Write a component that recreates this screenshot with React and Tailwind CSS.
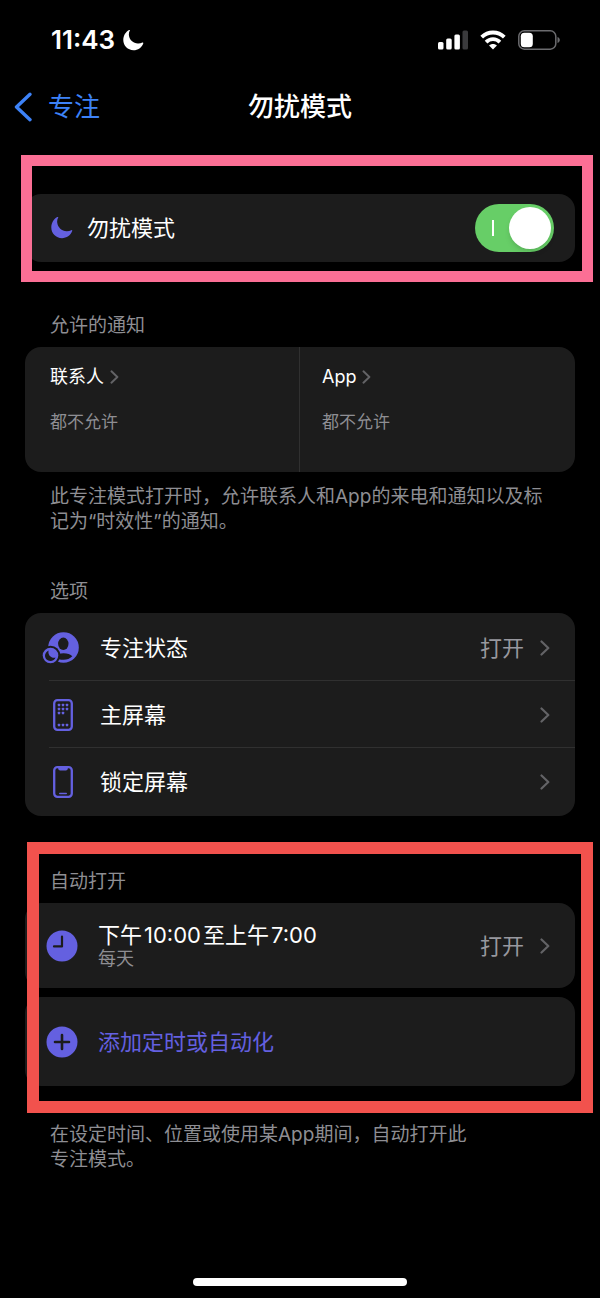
import React from "react";

const MOON = "M7.2 0.6C6.3 2.2 6 3.8 6.2 5.6C6.7 10.6 11 14.4 16 14.2C17.6 14.1 19 13.8 20.3 13.2C21 12.9 21.5 13.4 21.2 14.1C19.6 18.4 15.6 21.2 11 21.2C5 21.2 0.3 16.5 0.3 10.6C0.3 6.1 2.7 2.1 6.3 0.1C7 -0.2 7.5 0.1 7.2 0.6Z";

function Moon({ className }) {
  return (
    <svg viewBox="0 0 22 22" className={className} fill="currentColor" aria-hidden="true">
      <path d={MOON} />
    </svg>
  );
}

function Chevron({ className }) {
  return (
    <svg viewBox="0 0 10 16" className={className} fill="none" stroke="#636366" strokeWidth="2.2" strokeLinecap="round" strokeLinejoin="round" aria-hidden="true">
      <path d="M1.5 1.5L8.3 8L1.5 14.5" />
    </svg>
  );
}

function StatusBar() {
  return (
    <div className="flex h-20 items-center justify-between pr-10 pl-[51px]">
      <div className="flex items-center gap-2">
        <time className="text-[26px] leading-8 font-semibold">11:43</time>
        <Moon className="h-[21px] w-[21px]" />
      </div>
      <div className="flex items-center gap-3">
        <svg viewBox="0 0 30 20" className="h-5 w-[30px]" fill="#fff" aria-hidden="true">
          <rect x="0" y="12" width="5.5" height="7.5" rx="1.5" />
          <rect x="8.2" y="8.5" width="5.5" height="11" rx="1.5" />
          <rect x="16.4" y="4.5" width="5.5" height="15" rx="1.5" />
          <rect x="24.5" y="0.5" width="5.5" height="19" rx="1.5" fill="#3a3a3c" />
        </svg>
        <svg viewBox="0 0 26 20" className="h-5 w-[26px]" fill="none" stroke="#fff" strokeWidth="3.8" aria-hidden="true">
          <path d="M1.7 7.2C8 0.9 18 0.9 24.3 7.2" />
          <path d="M6.1 12.2C10 8.2 16 8.2 19.9 12.2" />
          <path d="M13 19.6L9.1 15.6C11.3 13.6 14.7 13.6 16.9 15.6Z" fill="#fff" stroke="none" />
        </svg>
        <svg viewBox="0 0 42 20" className="h-5 w-[42px]" aria-hidden="true">
          <rect x="0.8" y="0.8" width="37" height="18.4" rx="5.5" fill="none" stroke="#6b6b6e" strokeWidth="1.5" />
          <rect x="2.8" y="2.8" width="12" height="14.4" rx="3.5" fill="#fff" />
          <path d="M39.5 7V13C41 12.5 41.8 11.4 41.8 10S41 7.5 39.5 7Z" fill="#6b6b6e" />
        </svg>
      </div>
    </div>
  );
}

function FocusStatusIcon() {
  return (
    <svg viewBox="0 0 44 34" className="h-[34px] w-11" aria-hidden="true">
      <circle cx="22.5" cy="16.5" r="15.3" fill="#6460e0" />
      <ellipse cx="22.3" cy="12.8" rx="5.2" ry="6.2" fill="#1c1c1c" />
      <path d="M14 25C16 22.8 19 22.2 22.5 22.2C26.5 22.2 29.5 23.4 31.3 25.2C29 27.6 26 28.8 22.5 28.8C19 28.8 16 28 14 25Z" fill="#1c1c1c" />
      <circle cx="9.5" cy="24.5" r="9.8" fill="#1c1c1c" />
      <circle cx="9.5" cy="24.5" r="7.8" fill="#6460e0" />
      <path d="M7.6 19.4C5.4 20.4 4 22.4 4 24.8C4 27.9 6.5 30 9.4 30C11.8 30 13.8 28.7 14.6 26.6C10.4 27.6 6.4 24 7.6 19.4Z" fill="#1c1c1c" />
    </svg>
  );
}

function HomeScreenIcon() {
  const dots = [[6, 6], [10, 6], [14, 6], [6, 10], [10, 10], [14, 10], [6, 14], [10, 14], [6, 26], [10, 26], [14, 26]];
  return (
    <svg viewBox="0 0 20 32" className="h-8 w-5" fill="#6460e0" aria-hidden="true">
      <rect x="1.2" y="1.2" width="17.6" height="29.6" rx="3.2" fill="none" stroke="#6460e0" strokeWidth="2.3" />
      {dots.map(([x, y]) => (
        <rect key={`${x}-${y}`} x={x - 1.2} y={y - 1.2} width="2.4" height="2.4" rx="0.5" />
      ))}
    </svg>
  );
}

function LockScreenIcon() {
  return (
    <svg viewBox="0 0 20 32" className="h-8 w-5" fill="#6460e0" aria-hidden="true">
      <rect x="1.2" y="1.2" width="17.6" height="29.6" rx="3.2" fill="none" stroke="#6460e0" strokeWidth="2.3" />
      <path d="M5.2 1.5H14.8V2.6Q14.8 4.6 12.8 4.6H7.2Q5.2 4.6 5.2 2.6Z" />
      <rect x="6" y="26.8" width="8" height="1.5" rx="0.7" />
    </svg>
  );
}

function ClockIcon() {
  return (
    <svg viewBox="0 0 32 32" className="h-8 w-8 shrink-0" aria-hidden="true">
      <circle cx="16" cy="16" r="15.5" fill="#6460e0" />
      <path d="M16 6.5V16.4H8" fill="none" stroke="#1c1c1c" strokeWidth="2.2" strokeLinecap="round" strokeLinejoin="round" />
    </svg>
  );
}

function PlusIcon() {
  return (
    <svg viewBox="0 0 32 32" className="h-8 w-8 shrink-0" aria-hidden="true">
      <circle cx="16" cy="16" r="15.5" fill="#6460e0" />
      <path d="M16 9V23M9 16H23" fill="none" stroke="#1c1c1c" strokeWidth="2.6" strokeLinecap="round" />
    </svg>
  );
}

function OptionRow({ icon, label, value, divided }) {
  return (
    <li className="relative">
      <a href="#" className="flex h-[67px] items-center pr-[25px] pl-4">
        <span className="mr-[15px] flex w-11 justify-center">{icon}</span>
        <span className="flex-1 text-[22px] leading-8">{label}</span>
        {value && <span className="mr-4 text-[22px] leading-8 text-[#98989f]">{value}</span>}
        <Chevron className="h-4 w-[10px]" />
      </a>
      {divided && <div className="absolute right-0 bottom-0 left-6 h-px bg-[#303030]" />}
    </li>
  );
}

function AllowedColumn({ title, className }) {
  return (
    <a href="#" className={className}>
      <span className="flex items-center gap-[6px]">
        <span className="text-[18px] leading-7">{title}</span>
        <Chevron className="h-[14px] w-[9px]" />
      </span>
      <span className="mt-[17px] block text-[17px] leading-7 text-[#8e8e93]">都不允许</span>
    </a>
  );
}

export default function App() {
  return (
    <div lang="zh-CN" className="flex min-h-screen flex-col bg-black font-['Inter','Noto_Sans_CJK_SC',sans-serif] text-white">
      <StatusBar />

      <header className="grid h-[54px] grid-cols-[1fr_auto_1fr] items-center px-[14px]">
        <a href="#" className="flex items-center gap-4 text-[26px] leading-9 text-[#3d82f7]">
          <svg viewBox="0 0 18 30" className="h-[30px] w-[18px]" fill="none" stroke="currentColor" strokeWidth="3.4" strokeLinecap="round" strokeLinejoin="round" aria-hidden="true">
            <path d="M16 2.3L2.5 15L16 27.7" />
          </svg>
          专注
        </a>
        <h1 className="text-[26px] leading-9 font-medium">勿扰模式</h1>
      </header>

      <main className="flex-1">
        <section className="relative mt-[21px] px-[25px] pt-[39px] pb-5">
          <label className="flex h-[68px] items-center rounded-2xl bg-[#1c1c1c] pr-[21px] pl-[26px]">
            <Moon className="h-[22px] w-[22px] text-[#6460e0]" />
            <span className="ml-[14px] flex-1 text-[22px] leading-8">勿扰模式</span>
            <span className="relative flex">
              <input type="checkbox" role="switch" defaultChecked className="peer h-12 w-[79px] appearance-none rounded-full bg-[#3a3a3c] checked:bg-[#67ce67]" />
              <span className="pointer-events-none absolute top-4 left-[17px] h-4 w-[2px] bg-white" />
              <span className="pointer-events-none absolute top-[3px] left-[3px] h-[42px] w-[42px] rounded-full bg-white shadow-md peer-checked:left-[34px]" />
            </span>
          </label>
          <div className="pointer-events-none absolute inset-y-0 right-[7px] left-[21px] border-[11px] border-[#fb6f95]" />
        </section>

        <section className="mt-[30px] px-[25px]">
          <h2 className="px-[25px] text-[19px] leading-7 text-[#8e8e93]">允许的通知</h2>
          <div className="mt-[7px] grid h-[125px] grid-cols-2 rounded-2xl bg-[#1c1c1c]">
            <AllowedColumn title="联系人" className="border-r border-[#303030] pt-4 pl-[25px]" />
            <AllowedColumn title="App" className="pt-4 pl-[22px]" />
          </div>
          <p className="mt-3 pl-[25px] text-[19px] leading-[25px] whitespace-nowrap text-[#8e8e93]">
            此专注模式打开时，允许联系人和App的来电和通知以及标
            <br />
            记为“时效性”的通知。
          </p>
        </section>

        <section className="mt-11 px-[25px]">
          <h2 className="px-[25px] text-[19px] leading-7 text-[#8e8e93]">选项</h2>
          <ul className="mt-[7px] rounded-2xl bg-[#1c1c1c] py-px">
            <OptionRow icon={<FocusStatusIcon />} label="专注状态" value="打开" divided />
            <OptionRow icon={<HomeScreenIcon />} label="主屏幕" divided />
            <OptionRow icon={<LockScreenIcon />} label="锁定屏幕" />
          </ul>
        </section>

        <section className="relative mt-[26px] px-[25px] pt-[26px] pb-[27px]">
          <h2 className="px-[25px] text-[19px] leading-7 text-[#8e8e93]">自动打开</h2>
          <a href="#" className="mt-[7px] flex h-[85px] items-center rounded-2xl bg-[#1c1c1c] pr-[25px] pl-[21px]">
            <ClockIcon />
            <span className="ml-[20px] flex-1">
              <span className="block text-[22px] leading-[26px]">
                下午<span className="mx-[2px]">10:00</span>至上午<span className="mx-[2px]">7:00</span>
              </span>
              <span className="block text-[18px] leading-[22px] text-[#8e8e93]">每天</span>
            </span>
            <span className="mr-4 text-[22px] leading-8 text-[#98989f]">打开</span>
            <Chevron className="h-4 w-[10px]" />
          </a>
          <button type="button" className="mt-[9px] flex h-[89px] w-full items-center rounded-2xl bg-[#1c1c1c] pl-[21px] text-left">
            <PlusIcon />
            <span className="ml-[20px] text-[22px] leading-8 text-[#6460e0]">添加定时或自动化</span>
          </button>
          <div className="pointer-events-none absolute inset-y-0 right-[7px] left-[27px] border-[12px] border-[#f2524d]" />
        </section>

        <p className="mt-[9px] pl-[50px] text-[19px] leading-[25px] text-[#8e8e93]">
          在设定时间、位置或使用某App期间，自动打开此
          <br />
          专注模式。
        </p>
      </main>

      <footer className="flex justify-center pb-3">
        <div className="h-2 w-[214px] rounded-full bg-white" />
      </footer>
    </div>
  );
}
